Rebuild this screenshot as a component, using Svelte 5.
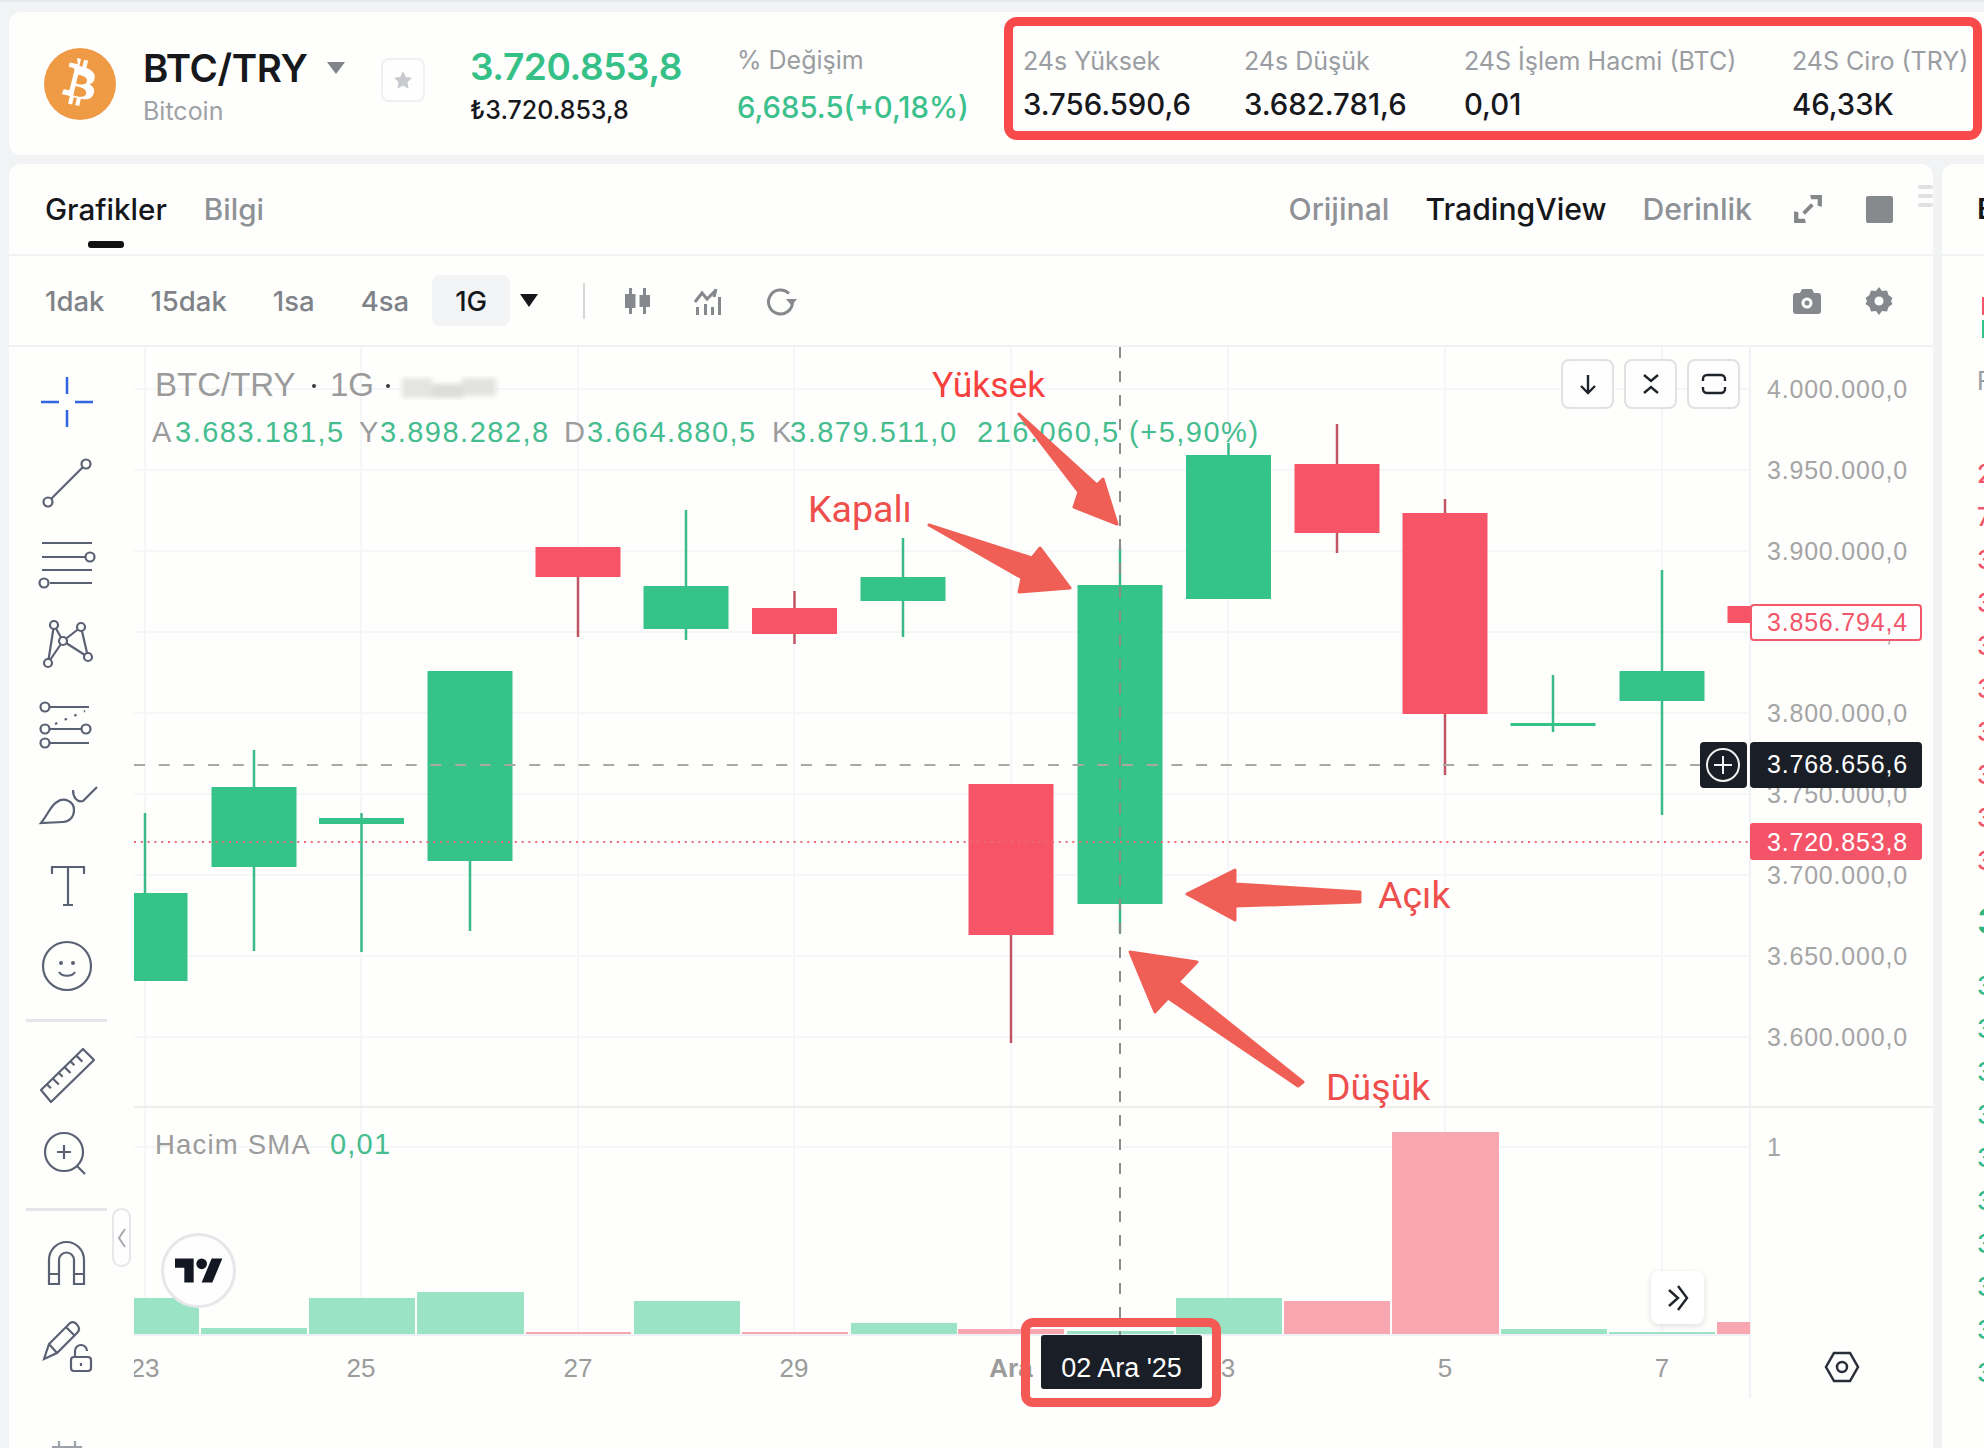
<script>
  const intervals = ['1dak', '15dak', '1sa', '4sa'];

  const stats = [
    { label: '24s Yüksek', value: '3.756.590,6' },
    { label: '24s Düşük', value: '3.682.781,6' },
    { label: '24S İşlem Hacmi (BTC)', value: '0,01' },
    { label: '24S Ciro (TRY)', value: '46,33K' }
  ];

  // x = candle centre, top/bottom = body, hi/lo = wick, all in page pixels
  const candles = [
    { x: 145, top: 893, bottom: 981, hi: 813, lo: 893, up: true },
    { x: 254, top: 787, bottom: 867, hi: 750, lo: 951, up: true },
    { x: 361.5, top: 818, bottom: 824, hi: 813, lo: 952, up: true },
    { x: 470, top: 671, bottom: 861, hi: 671, lo: 931, up: true },
    { x: 578, top: 547, bottom: 577, hi: 547, lo: 637, up: false },
    { x: 686, top: 586, bottom: 629, hi: 510, lo: 640, up: true },
    { x: 794.5, top: 608, bottom: 634, hi: 591, lo: 644, up: false },
    { x: 903, top: 577, bottom: 601, hi: 538, lo: 637, up: true },
    { x: 1011, top: 784, bottom: 935, hi: 784, lo: 1043, up: false },
    { x: 1120, top: 585, bottom: 904, hi: 547, lo: 933, up: true },
    { x: 1228.5, top: 455, bottom: 599, hi: 443, lo: 599, up: true },
    { x: 1337, top: 464, bottom: 533, hi: 424, lo: 553, up: false },
    { x: 1445, top: 513, bottom: 714, hi: 499, lo: 775, up: false },
    { x: 1553, top: 723, bottom: 726, hi: 675, lo: 732, up: true },
    { x: 1662, top: 671, bottom: 701, hi: 570, lo: 815, up: true },
    { x: 1770, top: 606, bottom: 623, hi: 606, lo: 623, up: false }
  ];

  const volumes = [
    { x: 134, w: 65, top: 1298, up: true },
    { x: 201, w: 106, top: 1328, up: true },
    { x: 309, w: 106, top: 1298, up: true },
    { x: 417, w: 107, top: 1292, up: true },
    { x: 526, w: 105, top: 1332, up: false },
    { x: 634, w: 106, top: 1301, up: true },
    { x: 742, w: 106, top: 1332, up: false },
    { x: 851, w: 106, top: 1323, up: true },
    { x: 958, w: 106, top: 1329, up: false },
    { x: 1067, w: 107, top: 1331, up: true },
    { x: 1176, w: 106, top: 1298, up: true },
    { x: 1284, w: 106, top: 1301, up: false },
    { x: 1392, w: 107, top: 1132, up: false },
    { x: 1501, w: 106, top: 1329, up: true },
    { x: 1609, w: 106, top: 1332, up: true },
    { x: 1717, w: 33, top: 1322, up: false }
  ];

  const priceLevels = [
    { y: 389, text: '4.000.000,0' },
    { y: 470, text: '3.950.000,0' },
    { y: 551, text: '3.900.000,0' },
    { y: 632, text: '3.850.000,0' },
    { y: 713, text: '3.800.000,0' },
    { y: 794, text: '3.750.000,0' },
    { y: 875, text: '3.700.000,0' },
    { y: 956, text: '3.650.000,0' },
    { y: 1037, text: '3.600.000,0' }
  ];

  const timeLabels = [
    { x: 145, text: '23' },
    { x: 361, text: '25' },
    { x: 578, text: '27' },
    { x: 794, text: '29' },
    { x: 1011, text: 'Ara', bold: true },
    { x: 1228, text: '3' },
    { x: 1445, text: '5' },
    { x: 1662, text: '7' }
  ];

  const asks = ['2', '7', '3', '3', '3', '3', '3', '3', '3', '3'];
  const bids = ['3', '3', '3', '3', '3', '3', '3', '3', '3', '3'];
</script>

<div class="page">
  <header class="ticker">
    <svg class="logo" viewBox="0 0 72 72">
      <circle cx="36" cy="36" r="36" fill="#ef9b46" />
      <path
        fill="#fff"
        fill-rule="evenodd"
        d="M33 10l4 1-1.600 7 3 .8 1.700-7 4 1-1.700 7.200c5.500 2 9 5 8.300 10-.5 3.700-2.500 5.600-5.300 6.200 3.800 2 5.700 5 4.200 9.600-1.900 5.600-6.500 6.200-12.700 5l-1.700 7.300-4-1 1.700-7.100-3.100-.8-1.700 7.200-4-1 1.700-7.300-8-2 2-5s3 .8 3.900 1c1.300.3 1.800-.5 2.100-1.200l4.600-18.600c.1-1-.3-2.100-1.900-2.500l-3.800-1 1.100-4.400 8 1.900zM31.500 38l-2.300 9.500c2.900.7 11.600 3.500 12.900-1.800 1.400-5.500-7.700-7-10.600-7.700zm2.700-11.200L32 35.400c2.400.6 9.700 3 10.900-1.800 1.200-5-6.300-6.200-8.700-6.800z"
      />
    </svg>
    <div class="pair">
      <div class="pair-top">
        <span class="symbol">BTC/TRY</span>
        <span class="caret"></span>
      </div>
      <span class="coin">Bitcoin</span>
    </div>
    <button class="star" aria-label="Favori">
      <svg viewBox="0 0 24 24" width="24" height="24"><path fill="#c8cacf" d="M12 3l2.800 6 6.200.8-4.500 4.400 1.100 6.500L12 17.600l-5.600 3.100 1.100-6.500L3 9.800 9.200 9z" /></svg>
    </button>
    <div class="price">
      <span class="last">3.720.853,8</span>
      <span class="fiat">₺3.720.853,8</span>
    </div>
    <div class="change">
      <span class="stat-label">% Değişim</span>
      <span class="change-value">6,685.5(+0,18%)</span>
    </div>
    <div class="stats">
      {#each stats as s}
        <div class="stat">
          <span class="stat-label">{s.label}</span>
          <span class="stat-value">{s.value}</span>
        </div>
      {/each}
    </div>
  </header>

  <div class="workspace">
    <section class="chart-card">
      <div class="tabs">
        <div class="tab-group">
          <span class="tab active">Grafikler<i class="marker"></i></span>
          <span class="tab">Bilgi</span>
        </div>
        <div class="view-group">
          <span class="tab">Orijinal</span>
          <span class="tab current">TradingView</span>
          <span class="tab">Derinlik</span>
          <svg class="expand" viewBox="0 0 28 28" width="30" height="30">
            <path fill="none" stroke="#84888b" stroke-width="3.600" d="M10 18l8-8" />
            <path fill="#84888b" d="M16 1h11v11l-4-1V5h-6zM1 16l4 1v6h6l1 4H1z" />
          </svg>
          <span class="layout-box"></span>
        </div>
        <div class="grip"><i></i><i></i><i></i></div>
      </div>

      <div class="toolbar">
        {#each intervals as t}
          <span class="interval">{t}</span>
        {/each}
        <span class="interval selected">1G</span>
        <span class="dd"></span>
        <span class="tb-divider"></span>
        <svg class="tb-icon first" viewBox="0 0 30 30" width="30" height="30">
          <path fill="#85898e" d="M6 2h3v6h3.500v14H9v6H6v-6H2V8h4zM20 2h3v7h4v12h-4v7h-3v-7h-3.500V9H20z" />
        </svg>
        <svg class="tb-icon" viewBox="0 0 30 30" width="30" height="30">
          <path fill="none" stroke="#85898e" stroke-width="3" d="M1 16l7-9 5 6 9-9" />
          <path fill="none" stroke="#85898e" stroke-width="3" d="M22 3l-2 8" />
          <path fill="#85898e" d="M2 21h3v8H2zM10 18h3v11h-3zM17 21h3v8h-3zM24 11h3v18h-3z" />
        </svg>
        <svg class="tb-icon" viewBox="0 0 32 30" width="32" height="30">
          <path fill="none" stroke="#85898e" stroke-width="3" d="M24 7.500A12 12 0 1 0 27.500 16" />
          <path fill="#85898e" d="M21 13h11l-5.500 6.500z" />
        </svg>
        <span class="tb-spacer"></span>
        <svg class="tb-icon" viewBox="0 0 28 28" width="28" height="28">
          <path fill="#85898e" fill-rule="evenodd" d="M9 2h10l2 4h4a3 3 0 0 1 3 3v15a3 3 0 0 1-3 3H3a3 3 0 0 1-3-3V9a3 3 0 0 1 3-3h4zm5 8.500a5.500 5.500 0 1 0 0 11 5.500 5.500 0 0 0 0-11zm0 3a2.500 2.500 0 1 1 0 5 2.500 2.500 0 0 1 0-5z" />
        </svg>
        <svg class="tb-icon gear" viewBox="0 0 28 28" width="28" height="28">
          <path fill="#85898e" fill-rule="evenodd" d="M14 0l3 4 5-.5 1.500 4.500 4 3-1.500 3 1.500 3-4 3-1.500 4.500-5-.5-3 4-3-4-5 .5L4.500 20l-4-3L2 14 .5 11l4-3L6 3.500l5 .5zm0 9.500a4.500 4.500 0 1 0 0 9 4.500 4.500 0 0 0 0-9z" />
        </svg>
      </div>

      <div class="chart-body">
        <nav class="tools">
          <svg class="tool" viewBox="0 0 60 60">
            <path class="cross" d="M4 30h18M38 30h18M30 5v17M30 38v17" />
          </svg>
          <svg class="tool" viewBox="0 0 60 60">
            <path d="M14 46L46 14" />
            <circle cx="11" cy="49" r="4.500" /><circle cx="49" cy="11" r="4.500" />
          </svg>
          <svg class="tool" viewBox="0 0 60 60">
            <path d="M5 10h50M5 24h44M5 37h50M13 50h42" />
            <circle cx="53" cy="24" r="4.500" /><circle cx="7" cy="50" r="4.500" />
          </svg>
          <svg class="tool" viewBox="0 0 60 60">
            <path d="M11 49L17 11M11 49L26 27M17 11L26 27M26 27L44 13M44 13L51 43M26 27L51 43" />
            <circle class="node" cx="17" cy="11" r="4" /><circle class="node" cx="44" cy="13" r="4" /><circle class="node" cx="26" cy="27" r="4" /><circle class="node" cx="51" cy="43" r="4" /><circle class="node" cx="11" cy="49" r="4" />
          </svg>
          <svg class="tool" viewBox="0 0 60 60">
            <path d="M13 13h39M13 35h32M13 49h39" />
            <path stroke-dasharray="2.500 8" d="M18 30L48 17" />
            <circle cx="8" cy="13" r="4.500" /><circle cx="8" cy="35" r="4.500" /><circle cx="49" cy="35" r="4.500" /><circle cx="8" cy="49" r="4.500" />
          </svg>
          <svg class="tool" viewBox="0 0 60 60">
            <path d="M4 48C12 38 14 30 20 27C27 22 37 26 37 35C37 43 31 47 26 47Z" />
            <path d="M36 15C36 22 40 28 46 26L60 12" />
          </svg>
          <svg class="tool" viewBox="0 0 60 60">
            <path d="M15 19V12H47V19M31 12V50M26 50H36" />
          </svg>
          <svg class="tool" viewBox="0 0 60 60">
            <circle cx="30" cy="30" r="24" />
            <circle class="dot" cx="24" cy="27" r="2" /><circle class="dot" cx="36" cy="27" r="2" />
            <path d="M22 36C25 41 35 41 38 36" />
          </svg>
          <span class="tool-sep"></span>
          <svg class="tool" viewBox="0 0 60 60">
            <path stroke-linejoin="round" d="M46 5L57 16L14 58L4 46Z" />
            <path d="M9.900 40.300l4 4M15.800 34.500l6 6M21.600 28.800l4 4M27.500 23l6 6M33.400 17.300l4 4M39.300 11.600l6 6" />
          </svg>
          <svg class="tool" viewBox="0 0 60 60">
            <circle cx="27" cy="27" r="19" />
            <path d="M27 20v14M20 27h14M40 41l8 8" />
          </svg>
          <span class="tool-sep"></span>
          <svg class="tool magnet" viewBox="0 0 60 60">
            <path d="M12 50V26A17.500 18 0 0 1 47 26V50H37V26A7.500 7.500 0 0 0 22 26V50ZM12 40H22M37 40H47" />
          </svg>
          <svg class="tool" viewBox="0 0 60 60">
            <path d="M7 39L12 24L33 3C36 1 39 3 41 6C43 9 42 11 40 13L20 33ZM12 24L20 33M29 7L37 15" />
            <rect x="34" y="37" width="20" height="14" rx="3" />
            <path d="M38 37V31A6 6 0 0 1 50 31" />
            <path d="M44 43v3" />
          </svg>
          <svg class="tool last" viewBox="0 0 60 60">
            <path d="M16 14H44V50H16ZM22 8V14M38 8V14" />
          </svg>
        </nav>

        <div class="canvas">
          <svg class="plot" viewBox="134 347 1799 1101" width="1799" height="1101">
            <defs>
              <clipPath id="pane"><rect x="134" y="347" width="1616" height="988" /></clipPath>
              <filter id="smear"><feGaussianBlur stdDeviation="2.500" /></filter>
            </defs>

            {#each timeLabels as t}
              <line class="grid" x1={t.x} x2={t.x} y1="347" y2="1335" />
            {/each}
            {#each priceLevels as p}
              <line class="grid" x1="134" x2="1750" y1={p.y} y2={p.y} />
            {/each}
            <line class="grid" x1="134" x2="1750" y1="1147" y2="1147" />
            <line class="axis" x1="1750" x2="1750" y1="347" y2="1398" />
            <line class="pane-line" x1="134" x2="1933" y1="1107" y2="1107" />
            <line class="axis" x1="134" x2="1750" y1="1335" y2="1335" />

            <g clip-path="url(#pane)">
              {#each volumes as v}
                <rect class={v.up ? 'vol-up' : 'vol-down'} x={v.x} y={v.top} width={v.w} height={1334 - v.top} />
              {/each}
              {#each candles as c}
                <line class={c.up ? 'wick-up' : 'wick-down'} x1={c.x} x2={c.x} y1={c.hi} y2={c.lo} />
                <rect class={c.up ? 'up' : 'down'} x={c.x - 42.5} y={c.top} width="85" height={c.bottom - c.top} />
              {/each}
            </g>

            <line class="last-line" x1="134" x2="1750" y1="842" y2="842" />
            <line class="cross-h" x1="134" x2="1700" y1="765" y2="765" />
            <line class="cross-v" x1="1120" x2="1120" y1="347" y2="1335" />

            <text class="title" x="155" y="396">BTC/TRY</text>
            <circle class="title-dot" cx="314" cy="386" r="2" />
            <text class="title" x="330" y="396">1G</text>
            <circle class="title-dot" cx="388" cy="386" r="2" />
            <g filter="url(#smear)">
              <rect x="402" y="378" width="30" height="20" fill="#e4e4e2" />
              <rect x="432" y="384" width="32" height="14" fill="#dcdcda" />
              <rect x="462" y="378" width="34" height="18" fill="#e2e2e0" />
            </g>

            <g class="legend">
              <text class="key" x="152" y="442">A</text><text x="175" y="442">3.683.181,5</text>
              <text class="key" x="359" y="442">Y</text><text x="380" y="442">3.898.282,8</text>
              <text class="key" x="564" y="442">D</text><text x="587" y="442">3.664.880,5</text>
              <text class="key" x="772" y="442">K</text><text x="790" y="442">3.879.511,0</text>
              <text x="977" y="442">216.060,5 (+5,90%)</text>
            </g>

            <text class="vol-title" x="155" y="1154">Hacim SMA</text>
            <text class="vol-title value" x="330" y="1154">0,01</text>

            {#each priceLevels as p}
              <text class="price-text" x="1767" y={p.y + 9}>{p.text}</text>
            {/each}
            <text class="price-text" x="1767" y="1156">1</text>

            {#each timeLabels as t}
              <text class="time-text" class:bold={t.bold} x={t.x} y="1377">{t.text}</text>
            {/each}

            <rect class="tag-outline" x="1751" y="605" width="170" height="35" rx="3" />
            <text class="price-text red" x="1767" y="631">3.856.794,4</text>
            <rect class="tag-dark" x="1750" y="742" width="172" height="46" rx="4" />
            <text class="price-text light" x="1767" y="773">3.768.656,6</text>
            <rect class="tag-dark" x="1700" y="742" width="47" height="46" rx="4" />
            <circle class="plus" cx="1723" cy="765" r="16" />
            <path class="plus" d="M1723 756v18M1714 765h18" />
            <rect class="tag-red" x="1750" y="823" width="172" height="37" rx="3" />
            <text class="price-text light" x="1767" y="851">3.720.853,8</text>

            <path class="gear-line" d="M1834 1353h16l8 14-8 14h-16l-8-14z" />
            <circle class="gear-line" cx="1842" cy="1367" r="5" />

            <polygon class="arrow" points="1019,414 1097,485 1103,479 1117,524 1074,507 1079,492" />
            <polygon class="arrow" points="929,525 1032,558 1040,548 1070,588 1019,592 1022,578" />
            <polygon class="arrow" points="1360,892 1235,884 1235,870 1187,894 1235,920 1235,906 1360,902" />
            <polygon class="arrow" points="1303,1082 1178,982 1197,962 1130,952 1155,1012 1168,998 1298,1086" />

            <text class="note bright" x="932" y="397">Yüksek</text>
            <text class="note" x="808" y="522">Kapalı</text>
            <text class="note" x="1378" y="908">Açık</text>
            <text class="note" x="1326" y="1100">Düşük</text>
          </svg>

          <div class="pane-buttons">
            <button class="pane-btn" aria-label="Aşağı">
              <svg viewBox="0 0 24 24" width="24" height="24"><path d="M12 3v18M5 14l7 7 7-7" /></svg>
            </button>
            <button class="pane-btn" aria-label="Daralt">
              <svg viewBox="0 0 24 24" width="24" height="24"><path d="M5 3l7 6 7-6M5 21l7-6 7 6" /></svg>
            </button>
            <button class="pane-btn" aria-label="Tam ekran">
              <svg viewBox="0 0 28 24" width="28" height="24"><path d="M3 9V7a4 4 0 0 1 4-4h14a4 4 0 0 1 4 4v2M3 15v2a4 4 0 0 0 4 4h14a4 4 0 0 0 4-4v-2" /></svg>
            </button>
          </div>

          <span class="collapse">
            <svg viewBox="0 0 12 24" width="12" height="24"><path d="M9 3L3 12l6 9" /></svg>
          </span>

          <span class="tv-badge">
            <svg viewBox="0 0 36 18" width="48" height="25"><path fill="#131722" d="M14 18H7V7H0V0h14zM28 18h-8L27.500 0h8z" /><circle cx="20" cy="4" r="4" fill="#131722" /></svg>
          </span>

          <button class="jump" aria-label="Sona git">
            <svg viewBox="0 0 24 28" width="24" height="28"><path d="M3 6l9 8-9 8M12 2l9 12-9 12" /></svg>
          </button>

          <div class="date-box"><span class="date">02 Ara '25</span></div>
        </div>
      </div>
    </section>

    <aside class="book">
      <div class="book-tabs">B</div>
      <div class="book-body">
        <div class="swatches"><i class="sw-red"></i><i class="sw-green"></i></div>
        <div class="book-head">F</div>
        <div class="rows asks">
          {#each asks as a}<span>{a}</span>{/each}
        </div>
        <div class="mid">3.720.853,8</div>
        <div class="rows bids">
          {#each bids as b}<span>{b}</span>{/each}
        </div>
      </div>
    </aside>
  </div>
</div>

<style>
  :global(body) {
    margin: 0;
    background: #f2f3f4;
  }

  .page {
    width: 1984px;
    height: 1448px;
    overflow: hidden;
    font-family: Inter, "Liberation Sans", sans-serif;
    color: #16181c;
    box-sizing: border-box;
    border-top: 2px solid #e6e7e8;
  }

  /* top ticker */
  .ticker {
    display: flex;
    align-items: center;
    height: 143px;
    margin: 10px 0 0 9px;
    padding-left: 35px;
    background: #fefefc;
    border-radius: 12px 0 0 12px;
  }
  .logo {
    width: 72px;
    height: 72px;
    flex: none;
  }
  .pair {
    display: flex;
    flex-direction: column;
    width: 238px;
    margin-left: 27px;
    box-sizing: border-box;
  }
  .pair-top {
    display: flex;
    align-items: center;
    height: 44px;
    margin-top: 4px;
  }
  .symbol {
    font-size: 38.500px;
    font-weight: 600;
    letter-spacing: -0.4px;
  }
  .caret {
    width: 0;
    height: 0;
    margin-left: 19px;
    border: 9.500px solid transparent;
    border-top: 12px solid #808488;
    border-bottom: 0;
  }
  .coin {
    margin-top: 6px;
    font-size: 25px;
    line-height: 30px;
    color: #9ea1a6;
  }
  .star {
    display: flex;
    align-items: center;
    justify-content: center;
    width: 44px;
    height: 44px;
    padding: 0;
    background: #fefefe;
    border: 2px solid #eff0f2;
    border-radius: 8px;
    margin-top: -8px;
  }
  .price {
    display: flex;
    flex-direction: column;
    width: 267px;
    margin-left: 45px;
    padding-top: 2px;
  }
  .last {
    font-size: 37px;
    line-height: 44px;
    font-weight: 600;
    color: #34c087;
    letter-spacing: -0.4px;
  }
  .fiat {
    margin-top: 6px;
    font-size: 25px;
    line-height: 30px;
    font-weight: 500;
  }
  .change {
    display: flex;
    flex-direction: column;
    width: 267px;
    margin-top: 2px;
  }
  .change-value {
    margin-top: 4px;
    font-size: 29.300px;
    line-height: 46px;
    font-weight: 500;
    color: #3cc08c;
  }
  .stat-label {
    font-size: 25px;
    line-height: 42px;
    color: #9a9da1;
  }
  .stats {
    display: grid;
    grid-template-columns: 221px 220px 328px 1fr;
    align-self: flex-start;
    box-sizing: border-box;
    width: 978px;
    height: 123px;
    margin-top: 5px;
    padding: 14px 0 0 10px;
    border: 9px solid #f84a4a;
    border-radius: 13px;
  }
  .stat {
    display: flex;
    flex-direction: column;
    white-space: nowrap;
  }
  .stat-value {
    font-size: 29.300px;
    line-height: 46px;
    font-weight: 500;
  }

  .workspace {
    display: flex;
    gap: 9px;
    margin-top: 9px;
    padding-left: 9px;
  }

  .chart-card {
    width: 1924px;
    height: 1284px;
    flex: none;
    background: #fefefc;
    border-radius: 12px 12px 0 0;
    overflow: hidden;
  }

  /* tabs row */
  .tabs {
    position: relative;
    display: flex;
    justify-content: space-between;
    align-items: center;
    height: 90px;
    padding: 0 40px 0 36px;
    border-bottom: 2px solid #f1f2f2;
    box-sizing: content-box;
  }
  .tab-group,
  .view-group {
    display: flex;
    align-items: center;
    gap: 37px;
  }
  .view-group {
    gap: 36px;
  }
  .tab {
    position: relative;
    font-size: 29.600px;
    font-weight: 500;
    color: #8e9297;
  }
  .view-group .tab {
    font-size: 30.200px;
  }
  .tab.active,
  .tab.current {
    color: #15171b;
  }
  .marker {
    position: absolute;
    left: 43px;
    bottom: -21px;
    width: 36px;
    height: 7px;
    border-radius: 3px;
    background: #111;
  }
  .expand {
    margin-left: 5px;
  }
  .layout-box {
    width: 27px;
    height: 27px;
    margin-left: 7px;
    border-radius: 2px;
    background: #868a8c;
  }
  .grip {
    position: absolute;
    right: 0;
    top: 21px;
    display: flex;
    flex-direction: column;
    gap: 5px;
    width: 15px;
  }
  .grip i {
    height: 4px;
    border-radius: 2px;
    background: #dfe1e3;
  }

  /* interval toolbar */
  .toolbar {
    display: flex;
    align-items: center;
    height: 89px;
    padding: 0 40px 0 36px;
    border-bottom: 2px solid #f1f2f2;
  }
  .interval {
    margin-right: 46px;
    font-size: 27.500px;
    font-weight: 500;
    color: #7f8388;
  }
  .interval.selected {
    display: flex;
    align-items: center;
    justify-content: center;
    width: 78px;
    height: 51px;
    margin: 0 0 0 -23px;
    border-radius: 8px;
    background: #f3f4f5;
    color: #15171b;
  }
  .dd {
    width: 0;
    height: 0;
    margin-left: 10px;
    border: 9px solid transparent;
    border-top: 13px solid #15171b;
    border-bottom: 0;
  }
  .tb-divider {
    width: 2px;
    height: 36px;
    margin: 0 38px 0 45px;
    background: #d4d6d8;
  }
  .tb-icon {
    margin-right: 41px;
    flex: none;
  }
  .tb-spacer {
    flex: 1;
  }
  .tb-icon.gear {
    margin-right: 0;
    margin-left: 3px;
  }

  /* drawing tools */
  .chart-body {
    display: flex;
    height: 1101px;
  }
  .tools {
    display: flex;
    flex-direction: column;
    align-items: center;
    flex: none;
    width: 125px;
    padding: 15px 10px 0 0;
    box-sizing: border-box;
  }
  .tool {
    flex: none;
    width: 60px;
    height: 60px;
    margin: 10px 0 10.500px;
    overflow: visible;
    fill: none;
    stroke: #5a6172;
    stroke-width: 2.200;
  }
  .tool .cross {
    stroke: #2f66e0;
    stroke-width: 2.500;
  }
  .tool .dot {
    fill: #5a6172;
    stroke: none;
  }
  .tool .node {
    fill: #fefefc;
  }
  .tool.magnet {
    margin-top: 11px;
    margin-bottom: 16px;
  }
  .tool.last {
    margin-top: 42px;
    stroke: #9ba0ab;
  }
  .tool-sep {
    flex: none;
    width: 81px;
    height: 3px;
    margin: 13px 0 12px;
    background: #e5e6ea;
  }

  /* chart canvas */
  .canvas {
    position: relative;
    flex: 1;
  }
  .plot {
    position: absolute;
    left: 0;
    top: 0;
    font-family: "Liberation Sans", Arial, sans-serif;
  }
  .grid {
    stroke: #f5f6f8;
    stroke-width: 2;
  }
  .axis {
    stroke: #eff1f6;
    stroke-width: 2;
  }
  .pane-line {
    stroke: #eeeeec;
    stroke-width: 2;
  }
  .up {
    fill: #35c389;
  }
  .down {
    fill: #f75467;
  }
  .wick-up {
    stroke: #3ab98a;
    stroke-width: 2.500;
  }
  .wick-down {
    stroke: #c25465;
    stroke-width: 2.500;
  }
  .vol-up {
    fill: #9ae3c4;
  }
  .vol-down {
    fill: #f8a6b0;
  }
  .last-line {
    stroke: #ec6a78;
    stroke-width: 2;
    stroke-dasharray: 2 4.800;
  }
  .cross-h {
    stroke: #a9a8a2;
    stroke-width: 2;
    stroke-dasharray: 11 13.700;
  }
  .cross-v {
    stroke: #8c8c8c;
    stroke-width: 2;
    stroke-dasharray: 11 13;
  }
  .title {
    font-size: 33px;
    fill: #9b9b9b;
  }
  .title-dot {
    fill: #3a3a3a;
  }
  .legend text {
    font-size: 29px;
    letter-spacing: 1.500px;
    fill: #45bd8f;
  }
  .legend .key {
    fill: #9b9b9b;
  }
  .vol-title {
    font-size: 27.500px;
    letter-spacing: 1.200px;
    fill: #9b9b9b;
  }
  .vol-title.value {
    font-size: 29px;
    fill: #45bd8f;
  }
  .price-text {
    font-size: 25px;
    letter-spacing: 0.800px;
    fill: #a5a5a5;
  }
  .price-text.red {
    fill: #f1566a;
  }
  .price-text.light {
    fill: #fff;
  }
  .time-text {
    font-size: 26px;
    text-anchor: middle;
    fill: #9b9b9b;
  }
  .time-text.bold {
    font-weight: 700;
  }
  .tag-outline {
    fill: #fefefe;
    stroke: #f2596c;
    stroke-width: 2;
  }
  .tag-dark {
    fill: #1a1e26;
  }
  .tag-red {
    fill: #f55468;
  }
  .plus {
    fill: none;
    stroke: #f1f1f1;
    stroke-width: 2;
  }
  .gear-line {
    fill: none;
    stroke: #2a2e39;
    stroke-width: 2.500;
  }
  .arrow {
    fill: #ef5f56;
    stroke: #ef5f56;
    stroke-width: 3;
    stroke-linejoin: round;
  }
  .note {
    font-family: Roboto, Inter, sans-serif;
    font-size: 37.500px;
    fill: #ee4f4d;
  }
  .note.bright {
    font-size: 35.500px;
    fill: #f7413f;
  }

  .pane-buttons {
    position: absolute;
    left: 1427px;
    top: 12px;
    display: flex;
    gap: 10px;
  }
  .pane-btn {
    display: flex;
    align-items: center;
    justify-content: center;
    width: 53px;
    height: 50px;
    padding: 0;
    background: #fefefe;
    border: 2px solid #dfe1e5;
    border-radius: 8px;
  }
  .pane-btn svg,
  .jump svg {
    fill: none;
    stroke: #1f232b;
    stroke-width: 2.400;
  }
  .collapse {
    position: absolute;
    left: -22px;
    top: 861px;
    display: flex;
    align-items: center;
    justify-content: center;
    box-sizing: border-box;
    width: 19px;
    height: 59px;
    background: #fefefe;
    border: 2px solid #e5e7ea;
    border-radius: 9px;
  }
  .collapse svg {
    fill: none;
    stroke: #a6a9b0;
    stroke-width: 2;
  }
  .tv-badge {
    position: absolute;
    left: 27px;
    top: 886px;
    display: flex;
    align-items: center;
    justify-content: center;
    box-sizing: border-box;
    width: 75px;
    height: 75px;
    background: #fefefe;
    border: 3px solid #e6e7eb;
    border-radius: 50%;
  }
  .jump {
    position: absolute;
    left: 1517px;
    top: 924px;
    display: flex;
    align-items: center;
    justify-content: center;
    width: 53px;
    height: 53px;
    padding: 0;
    background: #fff;
    border: none;
    border-radius: 8px;
    box-shadow: 0 2px 6px rgba(30, 34, 45, 0.14);
  }
  .date-box {
    position: absolute;
    left: 887px;
    top: 971px;
    box-sizing: border-box;
    width: 200px;
    height: 89px;
    padding: 8px 11px;
    border: 9px solid #f45a55;
    border-radius: 12px;
  }
  .date {
    display: block;
    width: 161px;
    height: 54px;
    border-radius: 3px;
    background: #1a1e26;
    color: #fff;
    font-family: "Liberation Sans", Arial, sans-serif;
    font-size: 27px;
    line-height: 66px;
    text-align: center;
  }

  /* order book, mostly off screen */
  .book {
    flex: 1;
    height: 1284px;
    background: #fefefc;
    border-radius: 12px 0 0 0;
    overflow: hidden;
  }
  .book-tabs {
    height: 90px;
    padding-left: 35px;
    border-bottom: 2px solid #f1f2f2;
    font-size: 29px;
    font-weight: 600;
    line-height: 90px;
  }
  .book-body {
    padding-left: 35px;
    font-size: 25px;
  }
  .swatches {
    display: flex;
    flex-direction: column;
    gap: 5px;
    margin: 41px 0 0 5px;
  }
  .swatches i {
    width: 12px;
    height: 18px;
  }
  .sw-red {
    background: #f5566a;
  }
  .sw-green {
    background: #35c389;
  }
  .book-head {
    margin-top: 25px;
    line-height: 36px;
    color: #9a9da1;
  }
  .rows {
    display: flex;
    flex-direction: column;
    font-weight: 500;
    line-height: 43px;
  }
  .asks {
    margin-top: 54px;
    color: #f0566a;
  }
  .bids {
    color: #35b98a;
  }
  .mid {
    margin: 16px 0 22px;
    font-size: 36px;
    font-weight: 600;
    line-height: 44px;
    white-space: nowrap;
    color: #2fb583;
  }
</style>
